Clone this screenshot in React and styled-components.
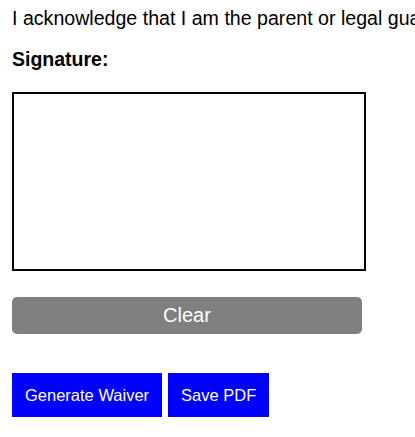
import React, { useRef } from 'react';
import styled, { createGlobalStyle } from 'styled-components';

const GlobalStyle = createGlobalStyle`
    html, body {
        margin: 0;
        padding: 0;
        background: #fff;
        overflow: hidden;
    }
    body {
        font-family: "Liberation Sans", Arial, sans-serif;
        color: #000;
    }
`;

const App = () => {
    const canvasRef = useRef(null);

    const clearCanvas = () => {
        const canvas = canvasRef.current;
        if (!canvas) return;
        canvas.getContext('2d').clearRect(0, 0, canvas.width, canvas.height);
    };

    return (
        <StPage>
            <GlobalStyle />
            <StIntro>
                I acknowledge that I am the parent or legal guardian of the participant named above.
            </StIntro>
            <StLabel>Signature:</StLabel>
            <StCanvas ref={canvasRef} width={350} height={175} />
            <StClearButton onClick={clearCanvas}>Clear</StClearButton>
            <StActions>
                <StActionButton>Generate Waiver</StActionButton>
                <StActionButton>Save PDF</StActionButton>
            </StActions>
        </StPage>
    );
};

export default App;

const StPage = styled.div`
    padding: 7px 12px;
    width: 415px;
    box-sizing: border-box;
`;

const StIntro = styled.p`
    margin: 0;
    font-size: 19.6px;
    line-height: 22px;
    white-space: nowrap;
`;

const StLabel = styled.p`
    margin: 18.5px 0 0;
    font-size: 19.5px;
    font-weight: bold;
    line-height: 22px;
`;

const StCanvas = styled.canvas`
    display: block;
    margin-top: 22.5px;
    border: 2px solid #000;
    width: 350px;
    height: 175px;
    background: #fff;
`;

const StClearButton = styled.button`
    display: block;
    margin-top: 26px;
    width: 350px;
    height: 37px;
    padding: 0;
    border: none;
    border-radius: 5px;
    background-color: #808080;
    color: #fff;
    font-family: "Liberation Sans", Arial, sans-serif;
    font-size: 20px;
    cursor: pointer;
`;

const StActions = styled.div`
    display: flex;
    gap: 6px;
    margin-top: 39px;
`;

const StActionButton = styled.button`
    height: 44px;
    padding: 0 13px;
    border: none;
    background-color: #0000ff;
    color: #fff;
    font-family: "Liberation Sans", Arial, sans-serif;
    font-size: 16.5px;
    cursor: pointer;
`;
